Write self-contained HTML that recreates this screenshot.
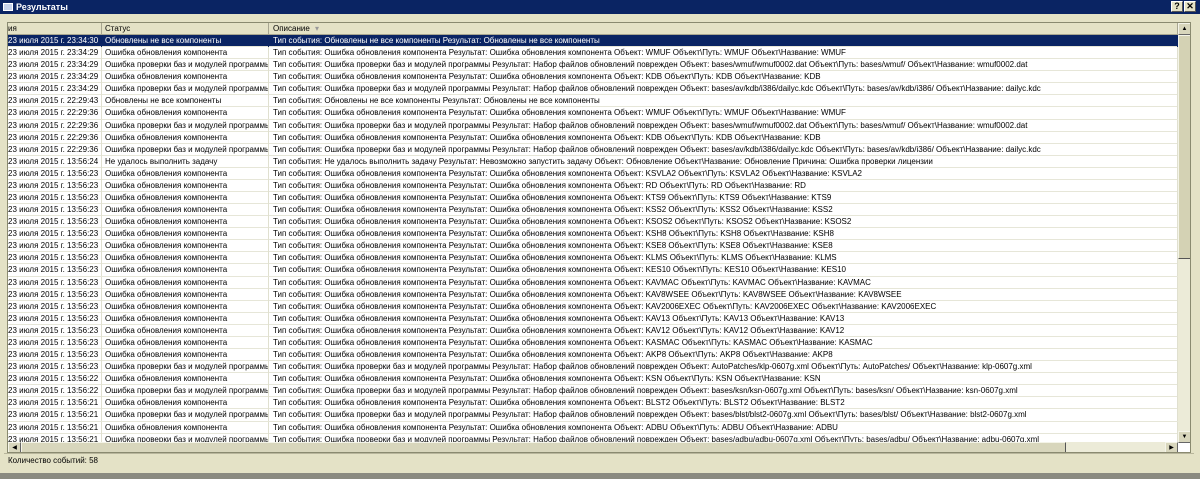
<!DOCTYPE html>
<html><head><meta charset="utf-8"><style>
*{margin:0;padding:0;box-sizing:border-box}
body{width:1200px;height:479px;background:#e4e2c6;font-family:"Liberation Sans",sans-serif;font-size:8px;color:#000;position:relative;overflow:hidden}
.title{position:absolute;left:0;top:0;width:1200px;height:14px;background:#0a2463;color:#fff;font-weight:bold;font-size:9px;line-height:14px;padding-left:16px}
.ico{position:absolute;left:3px;top:3px;width:10px;height:8px;background:#c8d4ec;border:1px solid #fff}
.btn{position:absolute;top:1px;width:12px;height:11px;background:#e4e2c6;border:1px solid #fff;border-right-color:#555;border-bottom-color:#555;color:#000;font-size:9px;line-height:9px;text-align:center;font-weight:bold}
.list{position:absolute;left:7px;top:22px;width:1184px;height:431px;background:#fff;border:1px solid #8a8a70;overflow:hidden}
.hdr{position:absolute;left:0;top:0;width:1170px;height:12px;background:#e4e2c6;border-bottom:1px solid #a8a690;line-height:11px}
.hdr span{position:absolute;top:0;height:12px;border-right:1px solid #a8a690;padding-left:3px}
.rows{position:absolute;left:0;top:12px;width:1170px}
.r{height:12.09px;line-height:11px;position:relative;border-bottom:1px solid #e6e6d8;white-space:nowrap}
.r span{position:absolute;top:0;height:12px;overflow:hidden;border-right:1px solid #e0e0d0}
.c1{left:0;width:94px;padding-left:0}
.c2{left:94px;width:167px;padding-left:3px}
.c3{left:261px;width:909px;padding-left:4px}
.sel{background:#0a2463;color:#fff}
.sel span{border-right-color:#0a2463}
.vs{position:absolute;left:1170px;top:0;width:13px;height:420px;background:#ecebd8}
.vs .th{position:absolute;left:0;top:12px;width:13px;height:224px;background:#d4d2b4;border:1px solid #f4f4e8;border-right-color:#555;border-bottom-color:#555}
.ab{position:absolute;width:13px;height:12px;background:#d8d6bc;border:1px solid #f4f4e8;border-right-color:#666;border-bottom-color:#666;font-size:6px;line-height:10px;text-align:center}
.hs{position:absolute;left:0;top:419px;width:1170px;height:11px;background:#ecebd8}
.hs .th{position:absolute;left:13px;top:0;width:1045px;height:11px;background:#d8d6bc;border:1px solid #f4f4e8;border-right-color:#555;border-bottom-color:#555}
.status{position:absolute;left:8px;top:456px;font-size:8px}
.sline{position:absolute;left:4px;top:453px;width:1190px;height:1px;background:#b8b69c}
.bottom{position:absolute;left:0;top:473px;width:1200px;height:6px;background:#8a8a80}
</style></head><body>
<div class="title"><div class="ico"></div>Результаты</div>
<div class="btn" style="left:1171px">?</div><div class="btn" style="left:1184px">✕</div>
<div class="list">
<div class="hdr"><span style="left:0;width:94px;padding-left:0">ия</span><span style="left:94px;width:167px">Статус</span><span style="left:261px;width:909px;padding-left:4px">Описание <span style="position:static;border:0;color:#999">▾</span></span></div>
<div class="rows">
<div class="r sel"><span class="c1">23 июля 2015 г. 23:34:30</span><span class="c2">Обновлены не все компоненты</span><span class="c3">Тип события: Обновлены не все компоненты Результат: Обновлены не все компоненты</span></div>
<div class="r"><span class="c1">23 июля 2015 г. 23:34:29</span><span class="c2">Ошибка обновления компонента</span><span class="c3">Тип события: Ошибка обновления компонента Результат: Ошибка обновления компонента Объект: WMUF Объект\Путь: WMUF Объект\Название: WMUF</span></div>
<div class="r"><span class="c1">23 июля 2015 г. 23:34:29</span><span class="c2">Ошибка проверки баз и модулей программы</span><span class="c3">Тип события: Ошибка проверки баз и модулей программы Результат: Набор файлов обновлений поврежден Объект: bases/wmuf/wmuf0002.dat Объект\Путь: bases/wmuf/ Объект\Название: wmuf0002.dat</span></div>
<div class="r"><span class="c1">23 июля 2015 г. 23:34:29</span><span class="c2">Ошибка обновления компонента</span><span class="c3">Тип события: Ошибка обновления компонента Результат: Ошибка обновления компонента Объект: KDB Объект\Путь: KDB Объект\Название: KDB</span></div>
<div class="r"><span class="c1">23 июля 2015 г. 23:34:29</span><span class="c2">Ошибка проверки баз и модулей программы</span><span class="c3">Тип события: Ошибка проверки баз и модулей программы Результат: Набор файлов обновлений поврежден Объект: bases/av/kdb/i386/dailyc.kdc Объект\Путь: bases/av/kdb/i386/ Объект\Название: dailyc.kdc</span></div>
<div class="r"><span class="c1">23 июля 2015 г. 22:29:43</span><span class="c2">Обновлены не все компоненты</span><span class="c3">Тип события: Обновлены не все компоненты Результат: Обновлены не все компоненты</span></div>
<div class="r"><span class="c1">23 июля 2015 г. 22:29:36</span><span class="c2">Ошибка обновления компонента</span><span class="c3">Тип события: Ошибка обновления компонента Результат: Ошибка обновления компонента Объект: WMUF Объект\Путь: WMUF Объект\Название: WMUF</span></div>
<div class="r"><span class="c1">23 июля 2015 г. 22:29:36</span><span class="c2">Ошибка проверки баз и модулей программы</span><span class="c3">Тип события: Ошибка проверки баз и модулей программы Результат: Набор файлов обновлений поврежден Объект: bases/wmuf/wmuf0002.dat Объект\Путь: bases/wmuf/ Объект\Название: wmuf0002.dat</span></div>
<div class="r"><span class="c1">23 июля 2015 г. 22:29:36</span><span class="c2">Ошибка обновления компонента</span><span class="c3">Тип события: Ошибка обновления компонента Результат: Ошибка обновления компонента Объект: KDB Объект\Путь: KDB Объект\Название: KDB</span></div>
<div class="r"><span class="c1">23 июля 2015 г. 22:29:36</span><span class="c2">Ошибка проверки баз и модулей программы</span><span class="c3">Тип события: Ошибка проверки баз и модулей программы Результат: Набор файлов обновлений поврежден Объект: bases/av/kdb/i386/dailyc.kdc Объект\Путь: bases/av/kdb/i386/ Объект\Название: dailyc.kdc</span></div>
<div class="r"><span class="c1">23 июля 2015 г. 13:56:24</span><span class="c2">Не удалось выполнить задачу</span><span class="c3">Тип события: Не удалось выполнить задачу Результат: Невозможно запустить задачу Объект: Обновление Объект\Название: Обновление Причина: Ошибка проверки лицензии</span></div>
<div class="r"><span class="c1">23 июля 2015 г. 13:56:23</span><span class="c2">Ошибка обновления компонента</span><span class="c3">Тип события: Ошибка обновления компонента Результат: Ошибка обновления компонента Объект: KSVLA2 Объект\Путь: KSVLA2 Объект\Название: KSVLA2</span></div>
<div class="r"><span class="c1">23 июля 2015 г. 13:56:23</span><span class="c2">Ошибка обновления компонента</span><span class="c3">Тип события: Ошибка обновления компонента Результат: Ошибка обновления компонента Объект: RD Объект\Путь: RD Объект\Название: RD</span></div>
<div class="r"><span class="c1">23 июля 2015 г. 13:56:23</span><span class="c2">Ошибка обновления компонента</span><span class="c3">Тип события: Ошибка обновления компонента Результат: Ошибка обновления компонента Объект: KTS9 Объект\Путь: KTS9 Объект\Название: KTS9</span></div>
<div class="r"><span class="c1">23 июля 2015 г. 13:56:23</span><span class="c2">Ошибка обновления компонента</span><span class="c3">Тип события: Ошибка обновления компонента Результат: Ошибка обновления компонента Объект: KSS2 Объект\Путь: KSS2 Объект\Название: KSS2</span></div>
<div class="r"><span class="c1">23 июля 2015 г. 13:56:23</span><span class="c2">Ошибка обновления компонента</span><span class="c3">Тип события: Ошибка обновления компонента Результат: Ошибка обновления компонента Объект: KSOS2 Объект\Путь: KSOS2 Объект\Название: KSOS2</span></div>
<div class="r"><span class="c1">23 июля 2015 г. 13:56:23</span><span class="c2">Ошибка обновления компонента</span><span class="c3">Тип события: Ошибка обновления компонента Результат: Ошибка обновления компонента Объект: KSH8 Объект\Путь: KSH8 Объект\Название: KSH8</span></div>
<div class="r"><span class="c1">23 июля 2015 г. 13:56:23</span><span class="c2">Ошибка обновления компонента</span><span class="c3">Тип события: Ошибка обновления компонента Результат: Ошибка обновления компонента Объект: KSE8 Объект\Путь: KSE8 Объект\Название: KSE8</span></div>
<div class="r"><span class="c1">23 июля 2015 г. 13:56:23</span><span class="c2">Ошибка обновления компонента</span><span class="c3">Тип события: Ошибка обновления компонента Результат: Ошибка обновления компонента Объект: KLMS Объект\Путь: KLMS Объект\Название: KLMS</span></div>
<div class="r"><span class="c1">23 июля 2015 г. 13:56:23</span><span class="c2">Ошибка обновления компонента</span><span class="c3">Тип события: Ошибка обновления компонента Результат: Ошибка обновления компонента Объект: KES10 Объект\Путь: KES10 Объект\Название: KES10</span></div>
<div class="r"><span class="c1">23 июля 2015 г. 13:56:23</span><span class="c2">Ошибка обновления компонента</span><span class="c3">Тип события: Ошибка обновления компонента Результат: Ошибка обновления компонента Объект: KAVMAC Объект\Путь: KAVMAC Объект\Название: KAVMAC</span></div>
<div class="r"><span class="c1">23 июля 2015 г. 13:56:23</span><span class="c2">Ошибка обновления компонента</span><span class="c3">Тип события: Ошибка обновления компонента Результат: Ошибка обновления компонента Объект: KAV8WSEE Объект\Путь: KAV8WSEE Объект\Название: KAV8WSEE</span></div>
<div class="r"><span class="c1">23 июля 2015 г. 13:56:23</span><span class="c2">Ошибка обновления компонента</span><span class="c3">Тип события: Ошибка обновления компонента Результат: Ошибка обновления компонента Объект: KAV2006EXEC Объект\Путь: KAV2006EXEC Объект\Название: KAV2006EXEC</span></div>
<div class="r"><span class="c1">23 июля 2015 г. 13:56:23</span><span class="c2">Ошибка обновления компонента</span><span class="c3">Тип события: Ошибка обновления компонента Результат: Ошибка обновления компонента Объект: KAV13 Объект\Путь: KAV13 Объект\Название: KAV13</span></div>
<div class="r"><span class="c1">23 июля 2015 г. 13:56:23</span><span class="c2">Ошибка обновления компонента</span><span class="c3">Тип события: Ошибка обновления компонента Результат: Ошибка обновления компонента Объект: KAV12 Объект\Путь: KAV12 Объект\Название: KAV12</span></div>
<div class="r"><span class="c1">23 июля 2015 г. 13:56:23</span><span class="c2">Ошибка обновления компонента</span><span class="c3">Тип события: Ошибка обновления компонента Результат: Ошибка обновления компонента Объект: KASMAC Объект\Путь: KASMAC Объект\Название: KASMAC</span></div>
<div class="r"><span class="c1">23 июля 2015 г. 13:56:23</span><span class="c2">Ошибка обновления компонента</span><span class="c3">Тип события: Ошибка обновления компонента Результат: Ошибка обновления компонента Объект: AKP8 Объект\Путь: AKP8 Объект\Название: AKP8</span></div>
<div class="r"><span class="c1">23 июля 2015 г. 13:56:23</span><span class="c2">Ошибка проверки баз и модулей программы</span><span class="c3">Тип события: Ошибка проверки баз и модулей программы Результат: Набор файлов обновлений поврежден Объект: AutoPatches/klp-0607g.xml Объект\Путь: AutoPatches/ Объект\Название: klp-0607g.xml</span></div>
<div class="r"><span class="c1">23 июля 2015 г. 13:56:22</span><span class="c2">Ошибка обновления компонента</span><span class="c3">Тип события: Ошибка обновления компонента Результат: Ошибка обновления компонента Объект: KSN Объект\Путь: KSN Объект\Название: KSN</span></div>
<div class="r"><span class="c1">23 июля 2015 г. 13:56:22</span><span class="c2">Ошибка проверки баз и модулей программы</span><span class="c3">Тип события: Ошибка проверки баз и модулей программы Результат: Набор файлов обновлений поврежден Объект: bases/ksn/ksn-0607g.xml Объект\Путь: bases/ksn/ Объект\Название: ksn-0607g.xml</span></div>
<div class="r"><span class="c1">23 июля 2015 г. 13:56:21</span><span class="c2">Ошибка обновления компонента</span><span class="c3">Тип события: Ошибка обновления компонента Результат: Ошибка обновления компонента Объект: BLST2 Объект\Путь: BLST2 Объект\Название: BLST2</span></div>
<div class="r"><span class="c1">23 июля 2015 г. 13:56:21</span><span class="c2">Ошибка проверки баз и модулей программы</span><span class="c3">Тип события: Ошибка проверки баз и модулей программы Результат: Набор файлов обновлений поврежден Объект: bases/blst/blst2-0607g.xml Объект\Путь: bases/blst/ Объект\Название: blst2-0607g.xml</span></div>
<div class="r"><span class="c1">23 июля 2015 г. 13:56:21</span><span class="c2">Ошибка обновления компонента</span><span class="c3">Тип события: Ошибка обновления компонента Результат: Ошибка обновления компонента Объект: ADBU Объект\Путь: ADBU Объект\Название: ADBU</span></div>
<div class="r"><span class="c1">23 июля 2015 г. 13:56:21</span><span class="c2">Ошибка проверки баз и модулей программы</span><span class="c3">Тип события: Ошибка проверки баз и модулей программы Результат: Набор файлов обновлений поврежден Объект: bases/adbu/adbu-0607g.xml Объект\Путь: bases/adbu/ Объект\Название: adbu-0607g.xml</span></div>
</div>
<div class="vs"><div class="ab" style="top:0;left:0">▲</div><div class="th"></div><div class="ab" style="top:408px;left:0">▼</div></div>
<div class="hs"><div class="ab" style="left:0;top:0;height:11px">◀</div><div class="th"></div><div class="ab" style="left:1157px;top:0;height:11px">▶</div></div>
</div>
<div class="sline"></div>
<div class="status">Количество событий: 58</div>
<div class="bottom"></div>
</body></html>
